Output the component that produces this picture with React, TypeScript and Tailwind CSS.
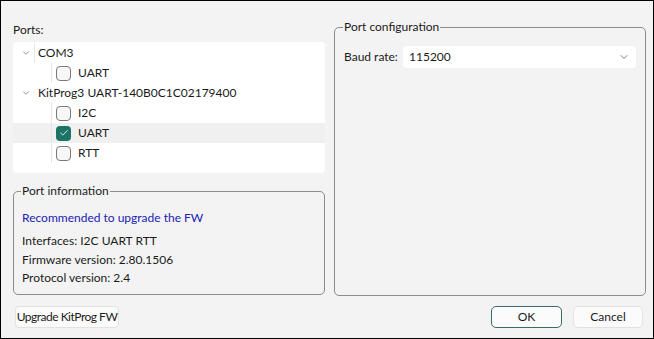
import { Check, ChevronDown } from "lucide-react";

function Box({ checked }: { checked?: boolean }) {
  if (checked) {
    return (
      <span className="w-[15px] h-[15px] rounded-[4px] bg-[#1a7566] flex items-center justify-center">
        <Check size={10} strokeWidth={2} className="text-white" />
      </span>
    );
  }
  return <span className="w-[15px] h-[15px] rounded-[4px] border border-[#7a7a7a] bg-[#f7f7f7]" />;
}

function Leaf({ label, checked, active }: { label: string; checked?: boolean; active?: boolean }) {
  return (
    <div className={`h-[20px] flex items-center ${active ? "bg-[#f0f0f0]" : ""}`}>
      <div className="w-[38px] self-stretch" />
      <div className="w-px self-stretch bg-[#e6e6e6]" />
      <div className="w-[4px]" />
      <Box checked={checked} />
      <span className="ml-[7px] text-[#1b1b1b]">{label}</span>
    </div>
  );
}

function Node({ label, line }: { label: string; line?: boolean }) {
  return (
    <div className="h-[20px] flex items-center">
      <div className="w-[18px] flex justify-end">
        <ChevronDown size={10} strokeWidth={1.5} className="text-[#555]" />
      </div>
      <div className="w-[3px]" />
      <div className={`w-px self-stretch ${line ? "bg-[#e6e6e6]" : ""}`} />
      <span className="ml-[3px] text-[#1b1b1b]">{label}</span>
    </div>
  );
}

export default function App() {
  return (
    <div
      className="w-[654px] h-[339px] border border-black bg-[#f3f3f3] text-[12px] leading-[18px] text-[#1b1b1b] flex flex-col"
      style={{ fontFamily: "Lato, 'Noto Sans', sans-serif" }}
    >
      <div className="flex gap-[9px] pl-[12px] pr-[7px] pt-[17px]">
        <div className="w-[312px] flex flex-col">
          <div className="h-[24px] flex items-center">Ports:</div>
          <div className="h-[131px] bg-white rounded-[4px] pt-[1px]">
            <Node label="COM3" line />
            <Leaf label="UART" />
            <Node label="KitProg3 UART-140B0C1C02179400" />
            <Leaf label="I2C" />
            <Leaf label="UART" checked active />
            <Leaf label="RTT" />
          </div>
          <fieldset className="mt-[11px] h-[111px] border border-[#8c8c8c] rounded-[5px] px-[8px]">
            <legend className="ml-[-1px] px-[1px] leading-[14px]">Port information</legend>
            <div className="mt-[11px] text-[#2222b0]">Recommended to upgrade the FW</div>
            <div className="mt-[5px]">Interfaces: I2C UART RTT</div>
            <div className="mt-[1px]">Firmware version: 2.80.1506</div>
            <div>Protocol version: 2.4</div>
          </fieldset>
        </div>
        <fieldset className="flex-1 h-[276px] border border-[#8c8c8c] rounded-[5px] px-[9px] mt-[2px]">
          <legend className="ml-[-1px] px-[1px] leading-[14px]">Port configuration</legend>
          <div className="mt-[12px] flex items-center">
            <span className="w-[59px]">Baud rate:</span>
            <div className="flex-1 h-[22px] bg-white rounded-[4px] flex items-center pl-[6px] pr-[6px]">
              <span className="flex-1">115200</span>
              <ChevronDown size={12} strokeWidth={1.5} className="text-[#555]" />
            </div>
          </div>
        </fieldset>
      </div>
      <div className="flex items-center pl-[14px] pr-[10px] mt-[10px]">
        <button className="w-[104px] h-[22px] bg-[#fbfbfb] border border-[#e2e2e2] rounded-[4px] tracking-[-0.5px] whitespace-nowrap">Upgrade KitProg FW</button>
        <div className="flex-1" />
        <button className="w-[71px] h-[22px] bg-[#fbfbfb] border border-[#3d6b68] rounded-[5px]">OK</button>
        <button className="ml-[11px] w-[70px] h-[22px] bg-[#fbfbfb] border border-[#e2e2e2] rounded-[5px]">Cancel</button>
      </div>
    </div>
  );
}
